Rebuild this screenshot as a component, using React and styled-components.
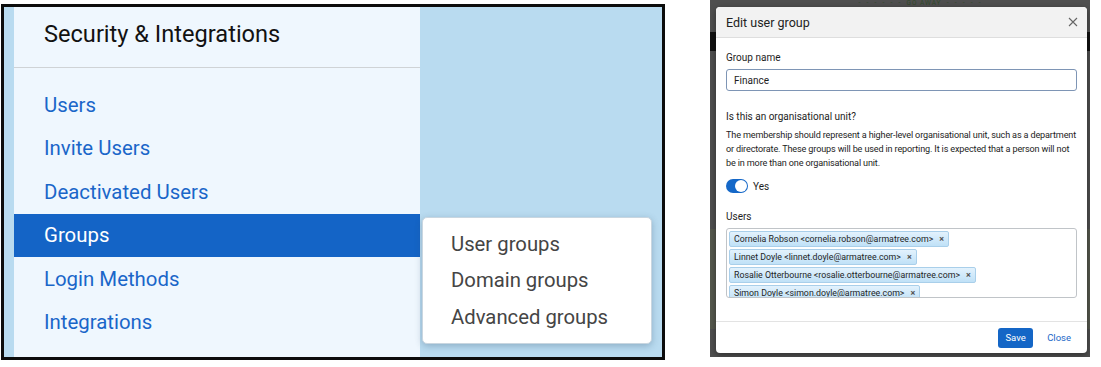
import React from "react";
import styled, { createGlobalStyle } from "styled-components";

const Global = createGlobalStyle`
  html, body { margin: 0; padding: 0; background: #ffffff; }
  body { font-family: Roboto, "Liberation Sans", sans-serif; }
  * { box-sizing: border-box; }
`;

const Page = styled.div`
  display: flex;
  align-items: flex-start;
  width: 1101px;
  height: 367px;
  overflow: hidden;
`;

/* ---------- Left: sidebar screenshot ---------- */
const Frame = styled.div`
  position: relative;
  margin: 4px 0 0 1px;
  width: 664px;
  height: 356px;
  border: 3px solid #0c0c0c;
  background: #b9dbf0;
  padding-left: 10px;
  display: flex;
`;

const Sidebar = styled.nav`
  width: 406px;
  height: 100%;
  background: #eff7fe;
  display: flex;
  flex-direction: column;
`;

const SideHeader = styled.div`
  height: 61px;
  border-bottom: 1px solid #cfd3d6;
  padding: 0 0 7px 30px;
  display: flex;
  align-items: center;
  font-size: 23.6px;
  color: #121212;
`;

const NavList = styled.div`
  display: flex;
  flex-direction: column;
  padding-top: 15px;
`;

const NavItem = styled.div`
  height: 43.5px;
  display: flex;
  align-items: center;
  padding-left: 30px;
  font-size: 20.4px;
  color: ${(p) => (p.$active ? "#ffffff" : "#1a66c9")};
  background: ${(p) => (p.$active ? "#1464c6" : "transparent")};
`;

const Flyout = styled.div`
  position: absolute;
  left: 418px;
  top: 210px;
  width: 230px;
  height: 127px;
  background: #ffffff;
  border: 1px solid #c9d6e0;
  border-radius: 5px;
  box-shadow: 0 2px 7px rgba(40, 70, 100, 0.3);
  padding: 8px 0;
  display: flex;
  flex-direction: column;
`;

const FlyItem = styled.div`
  height: 37.5px;
  display: flex;
  align-items: center;
  padding-left: 28px;
  font-size: 20.3px;
  color: #454545;
`;

/* ---------- Right: modal screenshot ---------- */
const Shot = styled.div`
  position: relative;
  margin-left: 45px;
  width: 380px;
  height: 357px;
  overflow: hidden;
  background: #4f4f4f;
  display: flex;
  flex-direction: column;
`;

const Banner = styled.div`
  height: 7px;
  display: flex;
  justify-content: center;
  align-items: center;
  font-size: 6.5px;
  line-height: 7px;
  color: #2f4a2a;
  letter-spacing: 1px;
  padding-left: 40px;
  white-space: pre;
`;

const UnderBar = styled.div`
  margin-top: 25px;
  height: 19px;
  background: #111111;
`;

const UnderBand = styled.div`
  margin-top: ${(p) => p.$top}px;
  height: ${(p) => p.$h}px;
  background: ${(p) => p.$c};
`;

const Modal = styled.div`
  position: absolute;
  left: 6px;
  top: 7px;
  width: 371px;
  height: 346px;
  background: #ffffff;
  border-radius: 4px;
  box-shadow: 0 2px 6px rgba(0, 0, 0, 0.4);
  display: flex;
  flex-direction: column;
  overflow: hidden;
  color: #1d1d1d;
`;

const ModalHead = styled.div`
  height: 31px;
  background: #f2f2f2;
  border-bottom: 1px solid #dedede;
  display: flex;
  align-items: center;
  justify-content: space-between;
  padding: 0 9px 0 10px;
  font-size: 12.5px;
  color: #222;
`;

const CloseX = styled.svg`
  width: 10px;
  height: 10px;
`;

const ModalBody = styled.div`
  flex: 1;
  padding: 13px 10px 0 10px;
  display: flex;
  flex-direction: column;
`;

const Label = styled.div`
  font-size: 10px;
  line-height: 14px;
  color: #1d1d1d;
  margin-top: ${(p) => p.$mt || 0}px;
`;

const TextInput = styled.div`
  margin-top: 4px;
  height: 22px;
  border: 1px solid #7e95b5;
  border-radius: 3px;
  display: flex;
  align-items: center;
  padding-left: 7px;
  font-size: 10px;
  color: #1d1d1d;
`;

const Para = styled.p`
  margin: 4px 0 0 0;
  display: flex;
  flex-direction: column;
  font-size: 9.1px;
  letter-spacing: -0.15px;
  line-height: 14px;
  color: #1d1d1d;
`;

const ParaLine = styled.span`
  white-space: nowrap;
`;

const ToggleRow = styled.div`
  margin-top: 9px;
  display: flex;
  align-items: center;
  gap: 5px;
  font-size: 10px;
`;

const Switch = styled.div`
  width: 22px;
  height: 14px;
  border-radius: 7px;
  background: #1568c8;
  display: flex;
  justify-content: flex-end;
  align-items: center;
  padding: 1px;
`;

const Knob = styled.div`
  width: 12px;
  height: 12px;
  border-radius: 50%;
  background: #ffffff;
`;

const TagBox = styled.div`
  margin-top: 4px;
  height: 70px;
  border: 1px solid #c0c4c8;
  border-radius: 3px;
  padding: 2px 2px 0 2px;
  display: flex;
  flex-direction: column;
  align-items: flex-start;
  gap: 2px;
  overflow: hidden;
`;

const Tag = styled.div`
  flex: none;
  height: 16px;
  display: flex;
  align-items: center;
  padding: 0 4px;
  background: linear-gradient(#e3f2fd, #c0e1f7);
  border: 1px solid #a9cfea;
  border-radius: 2px;
  font-size: 8.8px;
  color: #1f1f1f;
  white-space: nowrap;
`;

const TagX = styled.span`
  margin-left: 6px;
  font-size: 9px;
  font-weight: 700;
  color: #555;
`;

const ModalFoot = styled.div`
  height: 32px;
  border-top: 1px solid #e3e3e3;
  display: flex;
  align-items: center;
  justify-content: flex-end;
  padding: 0 16px 0 0;
  gap: 14px;
`;

const SaveBtn = styled.div`
  width: 35px;
  height: 20px;
  border-radius: 3px;
  background: #1466c6;
  color: #fff;
  font-size: 9.5px;
  display: flex;
  align-items: center;
  justify-content: center;
`;

const LinkBtn = styled.div`
  font-size: 9.5px;
  color: #1c68c7;
`;

const nav = ["Users", "Invite Users", "Deactivated Users", "Groups", "Login Methods", "Integrations"];
const tags = [
  "Cornelia Robson <cornelia.robson@armatree.com>",
  "Linnet Doyle <linnet.doyle@armatree.com>",
  "Rosalie Otterbourne <rosalie.otterbourne@armatree.com>",
  "Simon Doyle <simon.doyle@armatree.com>",
];
const paraLines = [
  "The membership should represent a higher-level organisational unit, such as a department",
  "or directorate. These groups will be used in reporting. It is expected that a person will not",
  "be in more than one organisational unit.",
];

export default function App() {
  return (
    <>
      <Global />
      <Page>
        <Frame>
          <Sidebar>
            <SideHeader>Security &amp; Integrations</SideHeader>
            <NavList>
              {nav.map((n) => (
                <NavItem key={n} $active={n === "Groups"}>{n}</NavItem>
              ))}
            </NavList>
          </Sidebar>
          <Flyout>
            <FlyItem>User groups</FlyItem>
            <FlyItem>Domain groups</FlyItem>
            <FlyItem>Advanced groups</FlyItem>
          </Flyout>
        </Frame>

        <Shot>
          <Banner>{"-  -  -  -  -  -  GO AWAY  -  -  -  -  -"}</Banner>
          <UnderBar />
          <UnderBand $top={178} $h={100} $c="#55584d" />
          <Modal>
            <ModalHead>
              <span>Edit user group</span>
              <CloseX viewBox="0 0 10 10">
                <path d="M1 1 L9 9 M9 1 L1 9" stroke="#666" strokeWidth="1.1" fill="none" />
              </CloseX>
            </ModalHead>
            <ModalBody>
              <Label>Group name</Label>
              <TextInput>Finance</TextInput>
              <Label $mt={19}>Is this an organisational unit?</Label>
              <Para>
                {paraLines.map((l) => (
                  <ParaLine key={l}>{l}</ParaLine>
                ))}
              </Para>
              <ToggleRow>
                <Switch><Knob /></Switch>
                <span>Yes</span>
              </ToggleRow>
              <Label $mt={17}>Users</Label>
              <TagBox>
                {tags.map((t) => (
                  <Tag key={t}>{t}<TagX>×</TagX></Tag>
                ))}
              </TagBox>
            </ModalBody>
            <ModalFoot>
              <SaveBtn>Save</SaveBtn>
              <LinkBtn>Close</LinkBtn>
            </ModalFoot>
          </Modal>
        </Shot>
      </Page>
    </>
  );
}
